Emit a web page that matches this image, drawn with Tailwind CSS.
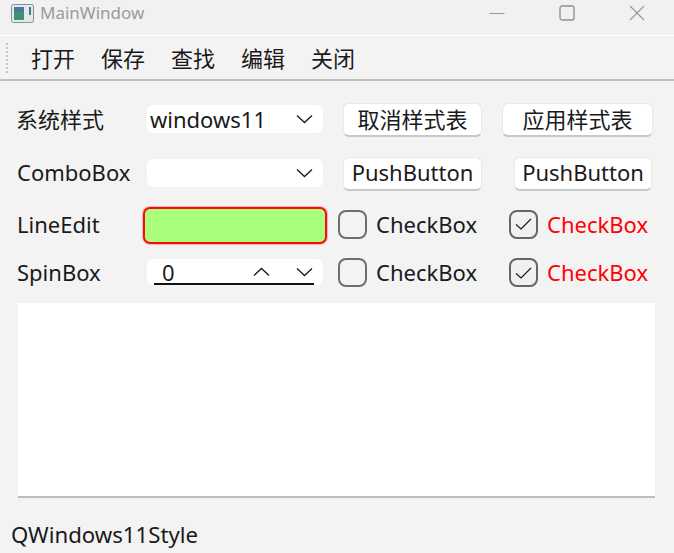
<!DOCTYPE html>
<html lang="en">
<head>
  <meta charset="UTF-8">
  <title>MainWindow</title>
  <script src="https://cdn.jsdelivr.net/npm/@tailwindcss/browser@4"></script>
</head>
<body class="relative w-[674px] h-[553px] overflow-hidden bg-[#f3f3f3] text-[#1a1a1a] text-[22px] leading-none font-['Noto_Sans','Noto_Sans_CJK_SC',sans-serif]">

  <!-- title bar -->
  <div class="h-[36px] flex items-center border-b border-white bg-[#f1f1f1]">
    <svg class="ml-[11px] mb-[9px]" width="23" height="19" viewBox="0 0 23 19">
      <rect x="0.5" y="0.5" width="22" height="18" rx="2" fill="#e4e8ea" stroke="#8c8f92"/>
      <rect x="3" y="3" width="10" height="13" fill="#3f9178"/>
      <rect x="3" y="3" width="10" height="5" fill="#47799a"/>
      <rect x="18" y="3" width="2" height="8" fill="#2e7f92"/>
    </svg>
    <span class="ml-[6px] mb-[11px] text-[#9a9a9a] text-[17px]">MainWindow</span>
    <div class="ml-auto mb-[9px] flex items-center">
      <svg width="16" height="16" viewBox="0 0 16 16"><path d="M0.5 8.5H15.5" stroke="#9a9a9a" fill="none"/></svg>
      <svg class="ml-[54px]" width="16" height="16" viewBox="0 0 16 16"><rect x="1" y="1" width="14" height="14" rx="2" stroke="#8e8e8e" stroke-width="1.3" fill="none"/></svg>
      <svg class="ml-[54px] mr-[29px]" width="16" height="16" viewBox="0 0 16 16"><path d="M1 1L15 15M15 1L1 15" stroke="#9a9a9a" stroke-width="1.2" fill="none"/></svg>
    </div>
  </div>

  <!-- toolbar -->
  <div class="h-[45px] flex items-center border-b-[2px] border-[#c2c2c2]">
    <div class="ml-[6px] w-[2px] h-[30px] border-l-2 border-dotted border-[#c4c4c4]"></div>
    <div class="ml-[23px] flex gap-[26px] pt-[1px]">
      <span>打开</span>
      <span>保存</span>
      <span>查找</span>
      <span>编辑</span>
      <span>关闭</span>
    </div>
  </div>

  <!-- form rows -->
  <div class="pl-[17px] pt-[22px]">
    <div class="flex items-center h-[34px]">
      <span class="w-[130px] mb-[3px] -ml-[1px] mr-[1px]">系统样式</span>
      <div class="w-[176px] h-[28px] mb-[2px] rounded-[6px] bg-white flex items-center justify-between pl-[3px] pr-[10px]">
        <span>windows11</span>
        <svg width="17" height="10" viewBox="0 0 17 10"><path d="M1 1.5L8.5 8.5L16 1.5" stroke="#1a1a1a" stroke-width="1.3" fill="none"/></svg>
      </div>
      <button class="ml-[20px] w-[139px] h-[34px] pb-[2px] rounded-[6px] bg-white border border-[#e8e8e8] border-b-[2px] border-b-[#c8c8c8]">取消样式表</button>
      <button class="ml-[20px] w-[151px] h-[34px] pb-[2px] rounded-[6px] bg-white border border-[#e8e8e8] border-b-[2px] border-b-[#c8c8c8]">应用样式表</button>
    </div>

    <div class="flex items-center h-[34px] mt-[20px]">
      <span class="w-[130px] mb-[4px]">ComboBox</span>
      <div class="w-[176px] h-[28px] mb-[2px] rounded-[6px] bg-white flex items-center justify-end pr-[10px]">
        <svg width="17" height="10" viewBox="0 0 17 10"><path d="M1 1.5L8.5 8.5L16 1.5" stroke="#1a1a1a" stroke-width="1.3" fill="none"/></svg>
      </div>
      <button class="ml-[20px] w-[139px] h-[34px] pb-[3px] rounded-[6px] bg-white border border-[#e8e8e8] border-b-[2px] border-b-[#c8c8c8]">PushButton</button>
      <button class="ml-[32px] w-[138px] h-[34px] pb-[3px] rounded-[6px] bg-white border border-[#e8e8e8] border-b-[2px] border-b-[#c8c8c8]">PushButton</button>
    </div>

    <div class="flex items-center h-[38px] mt-[15px]">
      <span class="w-[126px] mb-[2px]">LineEdit</span>
      <div class="w-[184px] h-[37px] rounded-[7px] bg-[#a9fe7c] border-[2px] border-[#f60d0d] shadow-[0_0_0_1px_#ffb4b4]"></div>
      <div class="ml-[11px] mb-[2px] w-[29px] h-[29px] rounded-[8px] border-2 border-[#6e6e6e]"></div>
      <span class="ml-[9px] mb-[3px] w-[133px]">CheckBox</span>
      <div class="mb-[2px] w-[29px] h-[29px] rounded-[8px] border-2 border-[#666666] bg-[#f0f0f0] flex items-center justify-center">
        <svg width="17" height="12" viewBox="0 0 17 12"><path d="M1 6.5L6 11L16 1" stroke="#1a1a1a" stroke-width="1.2" fill="none"/></svg>
      </div>
      <span class="ml-[9px] mb-[3px] text-[#ff0000]">CheckBox</span>
    </div>

    <div class="flex items-center h-[29px] mt-[14px]">
      <span class="w-[130px] mb-[2px]">SpinBox</span>
      <div class="relative w-[176px] h-[26px] mb-[1px] rounded-[6px] bg-white flex items-center pr-[10px]">
        <span class="ml-[15px]">0</span>
        <svg class="ml-auto" width="17" height="10" viewBox="0 0 17 10"><path d="M1 8.5L8.5 1.5L16 8.5" stroke="#1a1a1a" stroke-width="1.3" fill="none"/></svg>
        <svg class="ml-[26px]" width="17" height="10" viewBox="0 0 17 10"><path d="M1 1.5L8.5 8.5L16 1.5" stroke="#1a1a1a" stroke-width="1.3" fill="none"/></svg>
        <div class="absolute left-[7px] right-[9px] bottom-0 h-[2px] bg-[#111111]"></div>
      </div>
      <div class="ml-[15px] w-[29px] h-[29px] rounded-[8px] border-2 border-[#6e6e6e]"></div>
      <span class="ml-[9px] mb-[2px] w-[133px]">CheckBox</span>
      <div class="w-[29px] h-[29px] rounded-[8px] border-2 border-[#666666] bg-[#f0f0f0] flex items-center justify-center">
        <svg width="17" height="12" viewBox="0 0 17 12"><path d="M1 6.5L6 11L16 1" stroke="#1a1a1a" stroke-width="1.2" fill="none"/></svg>
      </div>
      <span class="ml-[9px] mb-[2px] text-[#ff0000]">CheckBox</span>
    </div>
  </div>

  <!-- text area -->
  <div class="ml-[18px] mt-[16px] w-[637px] h-[195px] bg-white border-b-[2px] border-[#bdbdbd]"></div>

  <!-- status bar -->
  <div class="pl-[11px] pt-[26px] text-[22.2px]">QWindows11Style</div>

</body>
</html>
